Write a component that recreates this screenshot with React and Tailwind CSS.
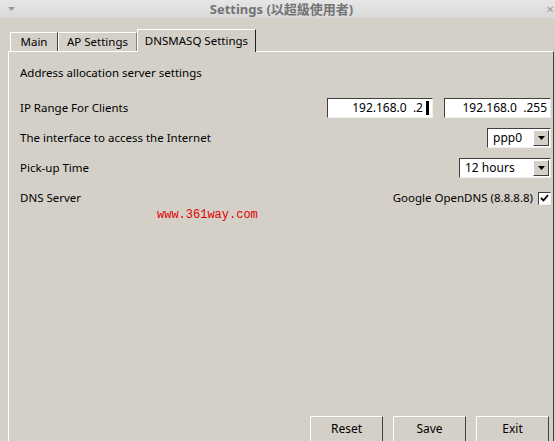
import React from 'react';

const font = { fontFamily: '"Noto Sans", "Noto Sans CJK TC", sans-serif' };

const DropArrow = () => (
    <div className="w-[16px] h-[16px] bg-[#d4d0c8] border border-t-white border-l-white border-r-[#404040] border-b-[#404040] flex items-center justify-center">
        <svg width="7" height="4" viewBox="0 0 7 4"><path d="M0 0h7L3.5 4z" fill="#000" /></svg>
    </div>
);

const Select = ({ value, width }) => (
    <div className={`${width} h-[20px] bg-white border border-t-[#404040] border-l-[#404040] border-r-[#f0f0f0] border-b-[#f0f0f0] flex items-center justify-between pl-[5px] pr-[1px]`}>
        <span className="text-[12px] text-black">{value}</span>
        <DropArrow />
    </div>
);

const IpField = ({ value, width, cursor }) => (
    <div className={`${width} h-[20px] bg-white border border-t-[#404040] border-l-[#404040] border-r-[#f0f0f0] border-b-[#f0f0f0] flex items-center justify-end pr-[3px] gap-[3px]`}>
        <span className="text-[12px] text-black whitespace-pre">{value}</span>
        {cursor && <span className="w-[3px] h-[14px] bg-black" />}
    </div>
);

const Button = ({ label }) => (
    <button className="w-[73px] h-[26px] shrink-0 bg-[#d4d0c8] border border-t-white border-l-white border-r-[#404040] border-b-[#404040] text-[12px] text-black">
        {label}
    </button>
);

export default function App() {
    return (
        <div className="w-[555px] h-[441px] overflow-hidden bg-[#d4d0c8] flex flex-col" style={font}>
            {/* Title bar */}
            <div className="h-[18px] shrink-0 bg-gradient-to-b from-[#e6e6e6] to-[#d9d9d9] flex items-center justify-between relative">
                <svg className="ml-[8px]" width="7" height="4" viewBox="0 0 7 4"><path d="M0 0h7L3.5 4z" fill="#9a9a9a" /></svg>
                <span className="absolute left-0 right-0 text-center pl-[8px] text-[13px] font-bold text-[#747474] leading-none">Settings (以超級使用者)</span>
                <span className="text-[10px] text-[#9a9a9a] leading-none mr-[1px]">✕</span>
            </div>

            {/* Tabs */}
            <div className="mt-[11px] shrink-0 pl-[10px] flex items-end h-[22px] text-[11.5px] text-black">
                <div className="w-[48px] h-[19px] border-t border-l border-r border-t-white border-l-white border-r-[#404040] flex items-center justify-center">Main</div>
                <div className="w-[79px] h-[19px] border-t border-l border-r border-t-white border-l-white border-r-[#808080] flex items-center justify-center">AP Settings</div>
                <div className="w-[119px] h-[23px] mb-[-1px] bg-[#d4d0c8] border-t border-l border-r border-t-white border-l-white border-r-[#202020] flex items-center justify-center relative z-10">DNSMASQ Settings</div>
            </div>

            {/* Pane */}
            <div className="ml-[8px] mr-[1px] h-[400px] shrink-0 border-t border-l border-r border-t-white border-l-white border-r-[#404040] flex flex-col pl-[11px] pr-[2px] pt-[12px] text-[11.5px] text-black">
                <div className="h-[18px] flex items-center">Address allocation server settings</div>

                <div className="mt-[16px] flex flex-col gap-[10px]">
                    <div className="h-[20px] flex items-center justify-between">
                        <span>IP Range For Clients</span>
                        <div className="flex gap-[11px]">
                            <IpField value="192.168.0  .2" width="w-[106px]" cursor />
                            <IpField value="192.168.0  .255" width="w-[107px]" />
                        </div>
                    </div>
                    <div className="h-[20px] flex items-center justify-between">
                        <span>The interface to access the Internet</span>
                        <Select value="ppp0" width="w-[64px]" />
                    </div>
                    <div className="h-[20px] flex items-center justify-between">
                        <span>Pick-up Time</span>
                        <Select value="12 hours" width="w-[92px]" />
                    </div>
                    <div className="h-[20px] flex items-center justify-between">
                        <span>DNS Server</span>
                        <div className="flex items-center gap-[5px]">
                            <span>Google OpenDNS (8.8.8.8)</span>
                            <div className="w-[13px] h-[13px] bg-white border border-t-[#404040] border-l-[#404040] border-r-[#f0f0f0] border-b-[#f0f0f0] flex items-center justify-center">
                                <svg width="9" height="8" viewBox="0 0 9 8"><path d="M1 4l2.5 2.5L8 1" stroke="#000" strokeWidth="1.8" fill="none" /></svg>
                            </div>
                        </div>
                    </div>
                </div>

                <div className="ml-[137px] text-[12px] text-[#e00000] leading-[14px]" style={{ fontFamily: '"Liberation Mono", monospace' }}>
                    www.361way.com
                </div>

                <div className="mt-auto mb-[9px] mr-[2px] flex justify-end gap-[10px]">
                    <Button label="Reset" />
                    <Button label="Save" />
                    <Button label="Exit" />
                </div>
            </div>
        </div>
    );
}
